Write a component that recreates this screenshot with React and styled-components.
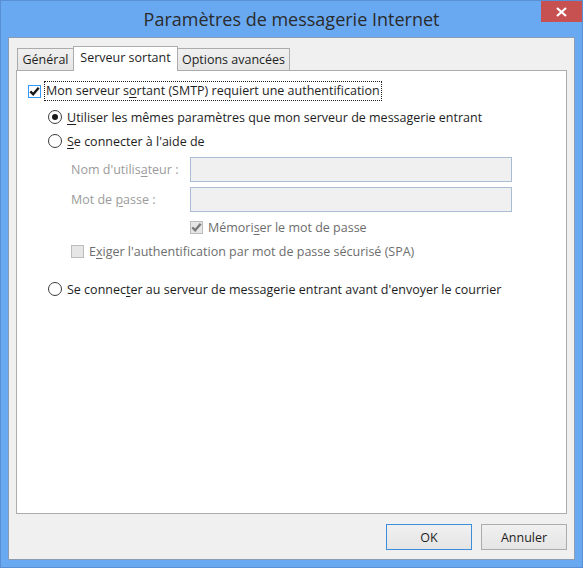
import React from 'react'
import styled, { createGlobalStyle } from 'styled-components'

const Global = createGlobalStyle`
    html, body {
        margin: 0;
        padding: 0;
        background: #ffffff;
    }
    * {
        box-sizing: border-box;
    }
`

const Window = styled.div`
    width: 583px;
    height: 568px;
    display: flex;
    flex-direction: column;
    background-color: #69a9f2;
    border: 1px solid #5a8fd6;
    padding: 0 7px 7px;
    font-family: "Open Sans", "Noto Sans", sans-serif;
`

const TitleBar = styled.header`
    position: relative;
    height: 36px;
    display: flex;
    align-items: center;
    justify-content: center;
`

const Title = styled.h1`
    margin: 0;
    font-size: 18px;
    font-weight: 400;
    color: #2b2b2b;
    padding-bottom: 1px;
`

const CloseButton = styled.button`
    position: absolute;
    top: 0;
    right: -7px;
    width: 41px;
    height: 21px;
    border: none;
    padding: 0;
    background-color: #c75050;
    display: flex;
    align-items: center;
    justify-content: center;
`

const Client = styled.main`
    flex: 1;
    display: flex;
    flex-direction: column;
    background-color: #f0f0f0;
    border: 1px solid #8b9db3;
    padding: 8px 7px 9px;
`

const TabStrip = styled.nav`
    display: flex;
    align-items: flex-end;
    height: 24px;
    padding-left: 1px;
`

const Tab = styled.div`
    position: relative;
    height: ${p => (p.$active ? '25px' : '22px')};
    width: ${p => p.$width}px;
    margin-left: ${p => (p.$first ? '0' : '-1px')};
    margin-bottom: ${p => (p.$active ? '-1px' : '0')};
    z-index: ${p => (p.$active ? 1 : 0)};
    border: 1px solid #acacac;
    border-bottom: none;
    background: ${p => (p.$active ? '#ffffff' : 'linear-gradient(#f0f0f0, #e5e5e5)')};
    font-size: 12.5px;
    color: #1e1e1e;
    text-align: center;
    white-space: nowrap;
    line-height: ${p => (p.$active ? '21px' : '22px')};
`

const Panel = styled.section`
    height: 444px;
    background-color: #ffffff;
    border: 1px solid #acacac;
    padding: 7px 0 0 11px;
    display: flex;
    flex-direction: column;
    font-size: 12.5px;
    color: #1e1e1e;
`

const Row = styled.div`
    display: flex;
    align-items: center;
    height: ${p => p.$h || 24}px;
    margin-top: ${p => p.$mt || 0}px;
    padding-left: ${p => p.$indent || 0}px;
    color: ${p => p.$color || 'inherit'};
`

const Box = styled.span`
    width: 13px;
    height: 13px;
    flex: none;
    border: 1px solid ${p => p.$border};
    background-color: ${p => p.$bg};
    display: flex;
    align-items: center;
    justify-content: center;
`

const Radio = styled.span`
    width: 14px;
    height: 14px;
    flex: none;
    border-radius: 50%;
    border: 1px solid #3c3c3c;
    background-color: #ffffff;
    display: flex;
    align-items: center;
    justify-content: center;
    &::after {
        content: '';
        display: ${p => (p.$checked ? 'block' : 'none')};
        width: 6px;
        height: 6px;
        border-radius: 50%;
        background-color: #1a1a1a;
    }
`

const Label = styled.span`
    margin-left: ${p => p.$gap || 5}px;
    white-space: nowrap;
`

const Focus = styled.span`
    margin-left: 4px;
    padding: 0 1px 1px 1px;
    outline: 1px dotted #1e1e1e;
    outline-offset: 0;
    white-space: nowrap;
`

const Key = styled.span`
    text-decoration: underline;
    text-underline-offset: 2px;
`

const FieldLabel = styled.span`
    width: 119px;
    color: #9b9b9b;
    white-space: nowrap;
`

const Input = styled.input`
    width: 322px;
    height: 25px;
    border: 1px solid #abbdd4;
    background-color: #f0f0f0;
    margin: 0;
`

const Footer = styled.footer`
    display: flex;
    justify-content: flex-end;
    gap: 9px;
    margin-top: 10px;
`

const Button = styled.button`
    width: 86px;
    height: 26px;
    border: 1px solid ${p => (p.$default ? '#3c8ed8' : '#acacac')};
    background: linear-gradient(#f0f0f0, #e5e5e5);
    font-family: inherit;
    font-size: 12.5px;
    color: #1e1e1e;
    padding: 0;
`

const Check = ({ color }) => (
    <svg width="11" height="11" viewBox="0 0 11 11">
        <path d="M1.3 5.4 L4.2 8.3 L9.7 1.8" fill="none" stroke={color} strokeWidth="2.4" />
    </svg>
)

export default function App() {
    return (
        <>
            <Global />
            <Window>
                <TitleBar>
                    <Title>Paramètres de messagerie Internet</Title>
                    <CloseButton aria-label="Fermer">
                        <svg width="11" height="10" viewBox="0 0 11 10">
                            <path d="M1 1 L10 9 M10 1 L1 9" stroke="#ffffff" strokeWidth="2.2" />
                        </svg>
                    </CloseButton>
                </TitleBar>
                <Client>
                    <TabStrip>
                        <Tab $first $width={57}>Général</Tab>
                        <Tab $active $width={105}>Serveur sortant</Tab>
                        <Tab $width={113}>Options avancées</Tab>
                    </TabStrip>
                    <Panel>
                        <Row $mt={1}>
                            <Box $border="#3399ff" $bg="#ffffff"><Check color="#1a1a1a" /></Box>
                            <Focus>Mon serveur s<Key>o</Key>rtant (SMTP) requiert une authentification</Focus>
                        </Row>
                        <Row $mt={2} $indent={20}>
                            <Radio $checked />
                            <Label><Key>U</Key>tiliser les mêmes paramètres que mon serveur de messagerie entrant</Label>
                        </Row>
                        <Row $indent={20}>
                            <Radio />
                            <Label><Key>S</Key>e connecter à l'aide de</Label>
                        </Row>
                        <Row $mt={4} $h={25} $indent={43}>
                            <FieldLabel>Nom d'utilis<Key>a</Key>teur :</FieldLabel>
                            <Input disabled />
                        </Row>
                        <Row $mt={5} $h={25} $indent={43}>
                            <FieldLabel>Mot de <Key>p</Key>asse :</FieldLabel>
                            <Input disabled />
                        </Row>
                        <Row $mt={3} $indent={162} $color="#6d6d6d">
                            <Box $border="#bcbcbc" $bg="#e6e6e6"><Check color="#7a7a7a" /></Box>
                            <Label>Mémori<Key>s</Key>er le mot de passe</Label>
                        </Row>
                        <Row $indent={43} $color="#6d6d6d">
                            <Box $border="#bcbcbc" $bg="#e6e6e6" />
                            <Label>E<Key>x</Key>iger l'authentification par mot de passe sécurisé (SPA)</Label>
                        </Row>
                        <Row $mt={14} $indent={20}>
                            <Radio />
                            <Label>Se connec<Key>t</Key>er au serveur de messagerie entrant avant d'envoyer le courrier</Label>
                        </Row>
                    </Panel>
                    <Footer>
                        <Button $default>OK</Button>
                        <Button>Annuler</Button>
                    </Footer>
                </Client>
            </Window>
        </>
    )
}
